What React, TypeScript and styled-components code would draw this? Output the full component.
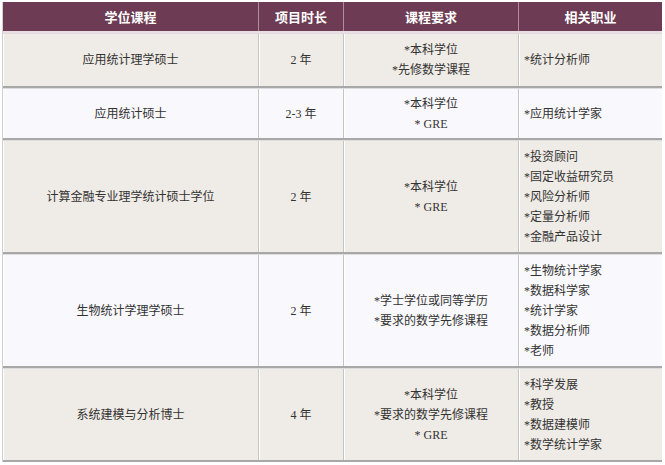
import React from 'react';
import styled, { createGlobalStyle } from 'styled-components';

const GlobalStyle = createGlobalStyle`
    html, body {
        margin: 0;
        padding: 0;
        background: #ffffff;
    }
    body {
        font-family: "Liberation Serif", "Noto Sans CJK SC", serif;
        color: #333333;
    }
`;

const COLUMNS = '256px 85px 175px 143px';

const Table = styled.div`
    width: 659px;
    margin: 2px 0 0 2px;
    display: flex;
    flex-direction: column;
    gap: 1px;
    background: #dddddd;
    border-left: 1px solid #cfcfcf;
`;

const HeaderRow = styled.div`
    display: grid;
    grid-template-columns: ${COLUMNS};
    height: 29px;
    background: #6d3b53;
    border-bottom: 2px solid #eadde3;
`;

const HeaderCell = styled.div`
    display: flex;
    align-items: center;
    justify-content: center;
    color: #ffffff;
    font-size: 13px;
    font-weight: bold;
    border-right: 1px solid #b08c9d;

    &:last-child {
        border-right: none;
    }
`;

const Row = styled.div<{ $shade: boolean; $height: number }>`
    display: grid;
    grid-template-columns: ${COLUMNS};
    height: ${(p) => p.$height}px;
    box-sizing: border-box;
    background: ${(p) => (p.$shade ? '#efebe6' : '#f9f8fc')};
    border-bottom: 2px solid #a8a8a8;
`;

const Cell = styled.div<{ $left?: boolean }>`
    display: flex;
    flex-direction: column;
    justify-content: center;
    align-items: ${(p) => (p.$left ? 'flex-start' : 'center')};
    padding-left: ${(p) => (p.$left ? '5px' : '0')};
    font-size: 12px;
    line-height: 20px;
    border-right: 1px solid #c4c4c4;
    box-shadow: inset 1px 0 0 #ffffff;

    &:last-child {
        border-right: none;
    }
`;

interface Programme {
    name: string;
    length: string;
    reqs: string[];
    jobs: string[];
    height: number;
}

const programmes: Programme[] = [
    {
        name: '应用统计理学硕士',
        length: '2 年',
        reqs: ['*本科学位', '*先修数学课程'],
        jobs: ['*统计分析师'],
        height: 54
    },
    {
        name: '应用统计硕士',
        length: '2-3 年',
        reqs: ['*本科学位', '* GRE'],
        jobs: ['*应用统计学家'],
        height: 51
    },
    {
        name: '计算金融专业理学统计硕士学位',
        length: '2 年',
        reqs: ['*本科学位', '* GRE'],
        jobs: ['*投资顾问', '*固定收益研究员', '*风险分析师', '*定量分析师', '*金融产品设计'],
        height: 113
    },
    {
        name: '生物统计学理学硕士',
        length: '2 年',
        reqs: ['*学士学位或同等学历', '*要求的数学先修课程'],
        jobs: ['*生物统计学家', '*数据科学家', '*统计学家', '*数据分析师', '*老师'],
        height: 113
    },
    {
        name: '系统建模与分析博士',
        length: '4 年',
        reqs: ['*本科学位', '*要求的数学先修课程', '* GRE'],
        jobs: ['*科学发展', '*教授', '*数据建模师', '*数学统计学家'],
        height: 93
    }
];

const App = () => {
    return (
        <>
            <GlobalStyle />
            <Table>
                <HeaderRow>
                    <HeaderCell>学位课程</HeaderCell>
                    <HeaderCell>项目时长</HeaderCell>
                    <HeaderCell>课程要求</HeaderCell>
                    <HeaderCell>相关职业</HeaderCell>
                </HeaderRow>
                {programmes.map((p, i) => (
                    <Row key={p.name} $shade={i % 2 === 0} $height={p.height}>
                        <Cell>{p.name}</Cell>
                        <Cell>{p.length}</Cell>
                        <Cell>
                            {p.reqs.map((r) => (
                                <span key={r}>{r}</span>
                            ))}
                        </Cell>
                        <Cell $left>
                            {p.jobs.map((j) => (
                                <span key={j}>{j}</span>
                            ))}
                        </Cell>
                    </Row>
                ))}
            </Table>
        </>
    );
};

export default App;
